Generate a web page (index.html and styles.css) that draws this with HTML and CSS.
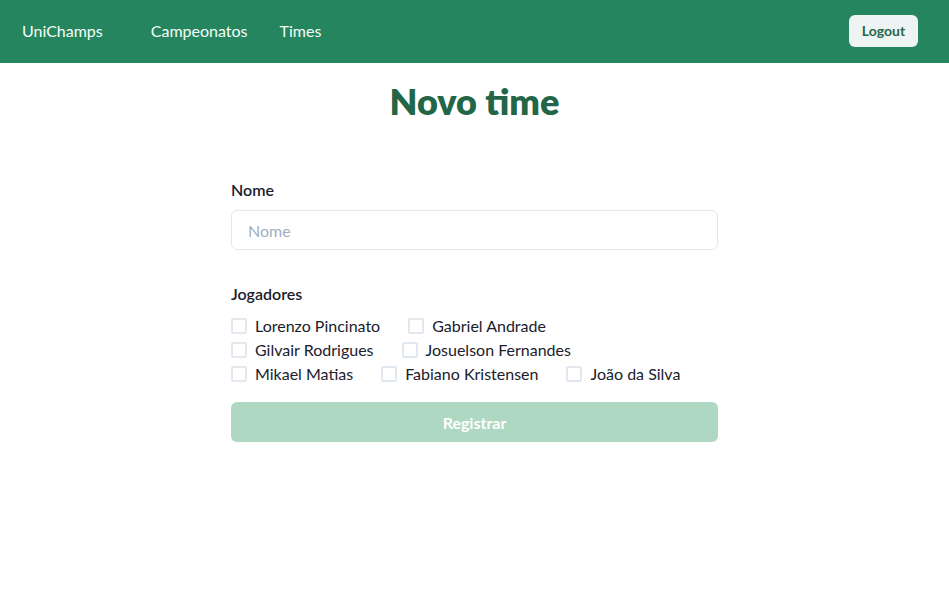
FILE: index.html
```html
<!DOCTYPE html>
<html lang="pt">
<head>
<meta charset="utf-8">
<title>UniChamps - Novo time</title>
<link rel="stylesheet" href="styles.css">
</head>
<body>
<nav class="navbar">
  <a class="brand" href="#">UniChamps</a>
  <a class="nav-link" href="#">Campeonatos</a>
  <a class="nav-link" href="#">Times</a>
  <button class="logout" type="button">Logout</button>
</nav>
<main class="page">
  <h1 class="title">Novo time</h1>
  <form class="form">
    <div class="field">
      <label class="label" for="nome">Nome</label>
      <input class="input" id="nome" type="text" placeholder="Nome">
    </div>
    <div class="field">
      <span class="label">Jogadores</span>
      <div class="players">
        <div class="row">
          <label class="check"><span class="box"></span><span>Lorenzo Pincinato</span></label>
          <label class="check"><span class="box"></span><span>Gabriel Andrade</span></label>
        </div>
        <div class="row">
          <label class="check"><span class="box"></span><span>Gilvair Rodrigues</span></label>
          <label class="check"><span class="box"></span><span>Josuelson Fernandes</span></label>
        </div>
        <div class="row">
          <label class="check"><span class="box"></span><span>Mikael Matias</span></label>
          <label class="check"><span class="box"></span><span>Fabiano Kristensen</span></label>
          <label class="check"><span class="box"></span><span>João da Silva</span></label>
        </div>
      </div>
    </div>
    <button class="submit" type="button" disabled>Registrar</button>
  </form>
</main>
</body>
</html>
```
FILE: styles.css
```css
* { box-sizing: border-box; }
body {
  margin: 0;
  font-family: "Lato", "Noto Sans", sans-serif;
  font-size: 16px;
  color: #1a202c;
  background: #ffffff;
}
.navbar {
  display: flex;
  align-items: center;
  height: 63px;
  padding: 0 31px 2px 22px;
  background: #24855e;
}
.brand, .nav-link {
  color: #f5fff8;
  text-decoration: none;
  font-size: 16px;
  line-height: 24px;
}
.brand { margin-right: 48px; }
.nav-link + .nav-link { margin-left: 32px; }
.logout {
  margin-left: auto;
  height: 32px;
  width: 69px;
  border: none;
  border-radius: 6px;
  background: #eef3f4;
  color: #276749;
  font-family: inherit;
  font-size: 14px;
  font-weight: 700;
}
.page { padding-top: 17px; }
.title {
  margin: 0;
  text-align: center;
  font-size: 36px;
  line-height: 43px;
  font-weight: 800;
  color: #236647;
}
.form {
  width: 487px;
  margin: 55px auto 0;
  display: flex;
  flex-direction: column;
}
.field {
  display: flex;
  flex-direction: column;
  gap: 8px;
  margin-bottom: 32px;
}
.field:nth-child(2) { margin-bottom: 16px; }
.label {
  font-weight: 600;
  line-height: 24px;
  color: #1a202c;
}
.input {
  height: 40px;
  padding: 0 16px;
  border: 1px solid #e2e8f0;
  border-radius: 6px;
  font-family: inherit;
  font-size: 16px;
  color: #1a202c;
}
.input::placeholder { color: #a0aec0; }
.players {
  display: flex;
  flex-direction: column;
}
.row {
  display: flex;
  column-gap: 28px;
}
.check {
  display: flex;
  align-items: center;
  gap: 8px;
  line-height: 24px;
  color: #1a202c;
}
.box {
  width: 16px;
  height: 16px;
  border: 2px solid #e2e8f0;
  border-radius: 2px;
}
.submit {
  height: 40px;
  border: none;
  border-radius: 6px;
  background: #afd8c3;
  color: #ffffff;
  font-family: inherit;
  font-size: 16px;
  font-weight: 700;
}
```
